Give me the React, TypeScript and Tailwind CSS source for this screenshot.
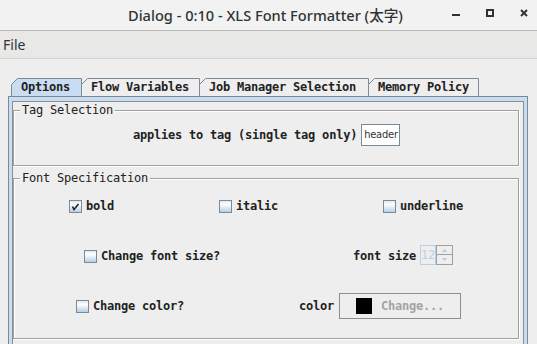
import React from "react";

const mono = { fontFamily: '"DejaVu Sans Mono", "Liberation Mono", monospace' } as const;

function CheckBox({ checked = false }: { checked?: boolean }) {
  return (
    <div className="w-[13px] h-[13px] border border-[#7a8a99] bg-[linear-gradient(to_bottom,#dde8f3_0%,#ffffff_30%,#b8cfe5_100%)] flex items-center justify-center shrink-0">
      {checked && (
        <svg width="11" height="11" viewBox="0 0 11 11">
          <path d="M2.5 5.5 L4 8.5 L8.5 3" stroke="#222" strokeWidth="1.6" fill="none" />
        </svg>
      )}
    </div>
  );
}

function Check({ label, checked }: { label: string; checked?: boolean }) {
  return (
    <div className="flex items-center gap-[4px]">
      <CheckBox checked={checked} />
      <span className="font-bold text-[12px] tracking-[-0.22px] text-[#222]">{label}</span>
    </div>
  );
}

function Tab({ label, width, selected }: { label: string; width: number; selected?: boolean }) {
  return (
    <div className="relative h-[18px] flex items-center shrink-0" style={{ width }}>
      <svg className="absolute inset-0" width={width + 1} height={18} viewBox={`0 0 ${width + 1} 18`}>
        <path
          d={`M0.5 18 L0.5 6.5 L6.5 0.5 L${width + 0.5} 0.5 L${width + 0.5} 18`}
          stroke="#7a8a99"
          strokeWidth="1"
          fill={selected ? "#c8ddf2" : "#eeeeee"}
        />
      </svg>
      <span className="relative pl-[10px] font-bold text-[12px] tracking-[-0.22px] text-[#222] whitespace-nowrap">{label}</span>
    </div>
  );
}

export default function App() {
  return (
    <div className="w-[537px] h-[344px] overflow-hidden bg-[#eeeeee] flex flex-col" style={mono}>
      {/* title bar */}
      <div
        className="h-[31px] shrink-0 bg-[#f2f2f2] border-b border-[#b8b8b8] flex items-center"
        style={{ fontFamily: '"Noto Sans", "Noto Sans CJK JP", sans-serif' }}
      >
        <div className="flex-1 pl-[128px]">
          <span className="text-[14.6px] font-medium text-[#2e3436] whitespace-nowrap">Dialog - 0:10 - XLS Font Formatter (太字)</span>
        </div>
        <svg width="87" height="30" viewBox="0 0 87 30" className="shrink-0">
          <rect x="2" y="14" width="8" height="2" fill="#2e3436" />
          <rect x="37" y="10" width="6" height="6" stroke="#2e3436" strokeWidth="2" fill="none" />
          <path d="M71 10 L77 16 M77 10 L71 16" stroke="#2e3436" strokeWidth="2" />
        </svg>
      </div>
      {/* menu bar */}
      <div
        className="h-[28px] shrink-0 bg-[#e8e8e7] border-b border-[#d3d3d3] flex items-center pl-[3px]"
        style={{ fontFamily: '"Noto Sans", sans-serif' }}
      >
        <span className="text-[14px] text-[#2e3436]">File</span>
      </div>
      {/* body */}
      <div className="pt-[19px] flex flex-col">
        <div className="flex pl-[11px]">
          <Tab label="Options" width={70} selected />
          <Tab label="Flow Variables" width={118} />
          <Tab label="Job Manager Selection" width={169} />
          <Tab label="Memory Policy" width={110} />
        </div>
        <div className="ml-[8px] w-[520px] h-[260px] border border-[#7a8a99] bg-[#c8ddf2] pt-[4px] px-[3px]">
          <div className="border border-[#8e8e8e] h-full bg-[#eeeeee] pr-[2px] pt-[1px]">
            <fieldset className="border border-[#a0a0a0] shadow-[inset_1px_1px_0_#ffffff,1px_1px_0_#ffffff] w-[506px]">
              <legend className="ml-[6px] px-[2px] bg-[#eeeeee] text-[12px] tracking-[-0.22px] text-[#222] leading-[14px]">Tag Selection</legend>
              <div className="flex items-center pl-[119px] pt-[7px] pb-[19px]">
                <span className="font-bold text-[12px] tracking-[-0.22px] text-[#222]">applies to tag (single tag only)</span>
                <div
                  className="ml-[4px] w-[39px] h-[22px] bg-white border border-[#7a8a99] flex items-center pl-[2px] text-[11px] tracking-[-0.2px] text-[#333]"
                  style={{ fontFamily: '"DejaVu Sans Condensed", "DejaVu Sans", sans-serif' }}
                >
                  header
                </div>
              </div>
            </fieldset>
            <fieldset className="mt-[5px] border border-[#a0a0a0] shadow-[inset_1px_1px_0_#ffffff,1px_1px_0_#ffffff] w-[506px] h-[168px]">
              <legend className="ml-[6px] px-[2px] bg-[#eeeeee] text-[12px] tracking-[-0.22px] text-[#222] leading-[14px]">Font Specification</legend>
              <div className="flex flex-col pt-[8px]">
                <div className="h-[26px] flex items-center">
                  <div className="ml-[55px] w-[150px]"><Check label="bold" checked /></div>
                  <div className="w-[164px]"><Check label="italic" /></div>
                  <div><Check label="underline" /></div>
                </div>
                <div className="h-[26px] mt-[24px] flex items-center">
                  <div className="ml-[70px] w-[269px]"><Check label="Change font size?" /></div>
                  <span className="w-[67px] font-bold text-[12px] tracking-[-0.22px] text-[#222]">font size</span>
                  <div className="flex -mt-[2px]">
                    <div className="w-[16px] h-[20px] border border-[#b8cfe5] bg-[#eeeeee] flex items-center text-[13px] tracking-[-0.5px] text-[#b8cfe5]" style={{ fontFamily: '"DejaVu Sans Condensed", "DejaVu Sans", sans-serif' }}>12</div>
                    <div className="flex flex-col w-[17px] h-[20px]">
                      <div className="h-[10px] border border-[#a0a0a0] flex items-center justify-center">
                        <svg width="5" height="3" viewBox="0 0 5 3"><path d="M0 3 L2.5 0 L5 3 Z" fill="#c0c8d0" /></svg>
                      </div>
                      <div className="h-[10px] border border-t-0 border-[#a0a0a0] flex items-center justify-center">
                        <svg width="5" height="3" viewBox="0 0 5 3"><path d="M0 0 L2.5 3 L5 0 Z" fill="#c0c8d0" /></svg>
                      </div>
                    </div>
                  </div>
                </div>
                <div className="h-[26px] mt-[24px] flex items-center">
                  <div className="ml-[62px] w-[223px]"><Check label="Change color?" /></div>
                  <span className="w-[40px] font-bold text-[12px] tracking-[-0.22px] text-[#222]">color</span>
                  <div className="w-[122px] h-[26px] border border-[#8e8e8e] flex items-center pl-[16px]">
                    <div className="w-[16px] h-[16px] bg-black" />
                    <span className="ml-[9px] font-bold text-[12px] tracking-[-0.22px] text-[#a3a3a3]">Change...</span>
                  </div>
                </div>
              </div>
            </fieldset>
          </div>
        </div>
      </div>
    </div>
  );
}
